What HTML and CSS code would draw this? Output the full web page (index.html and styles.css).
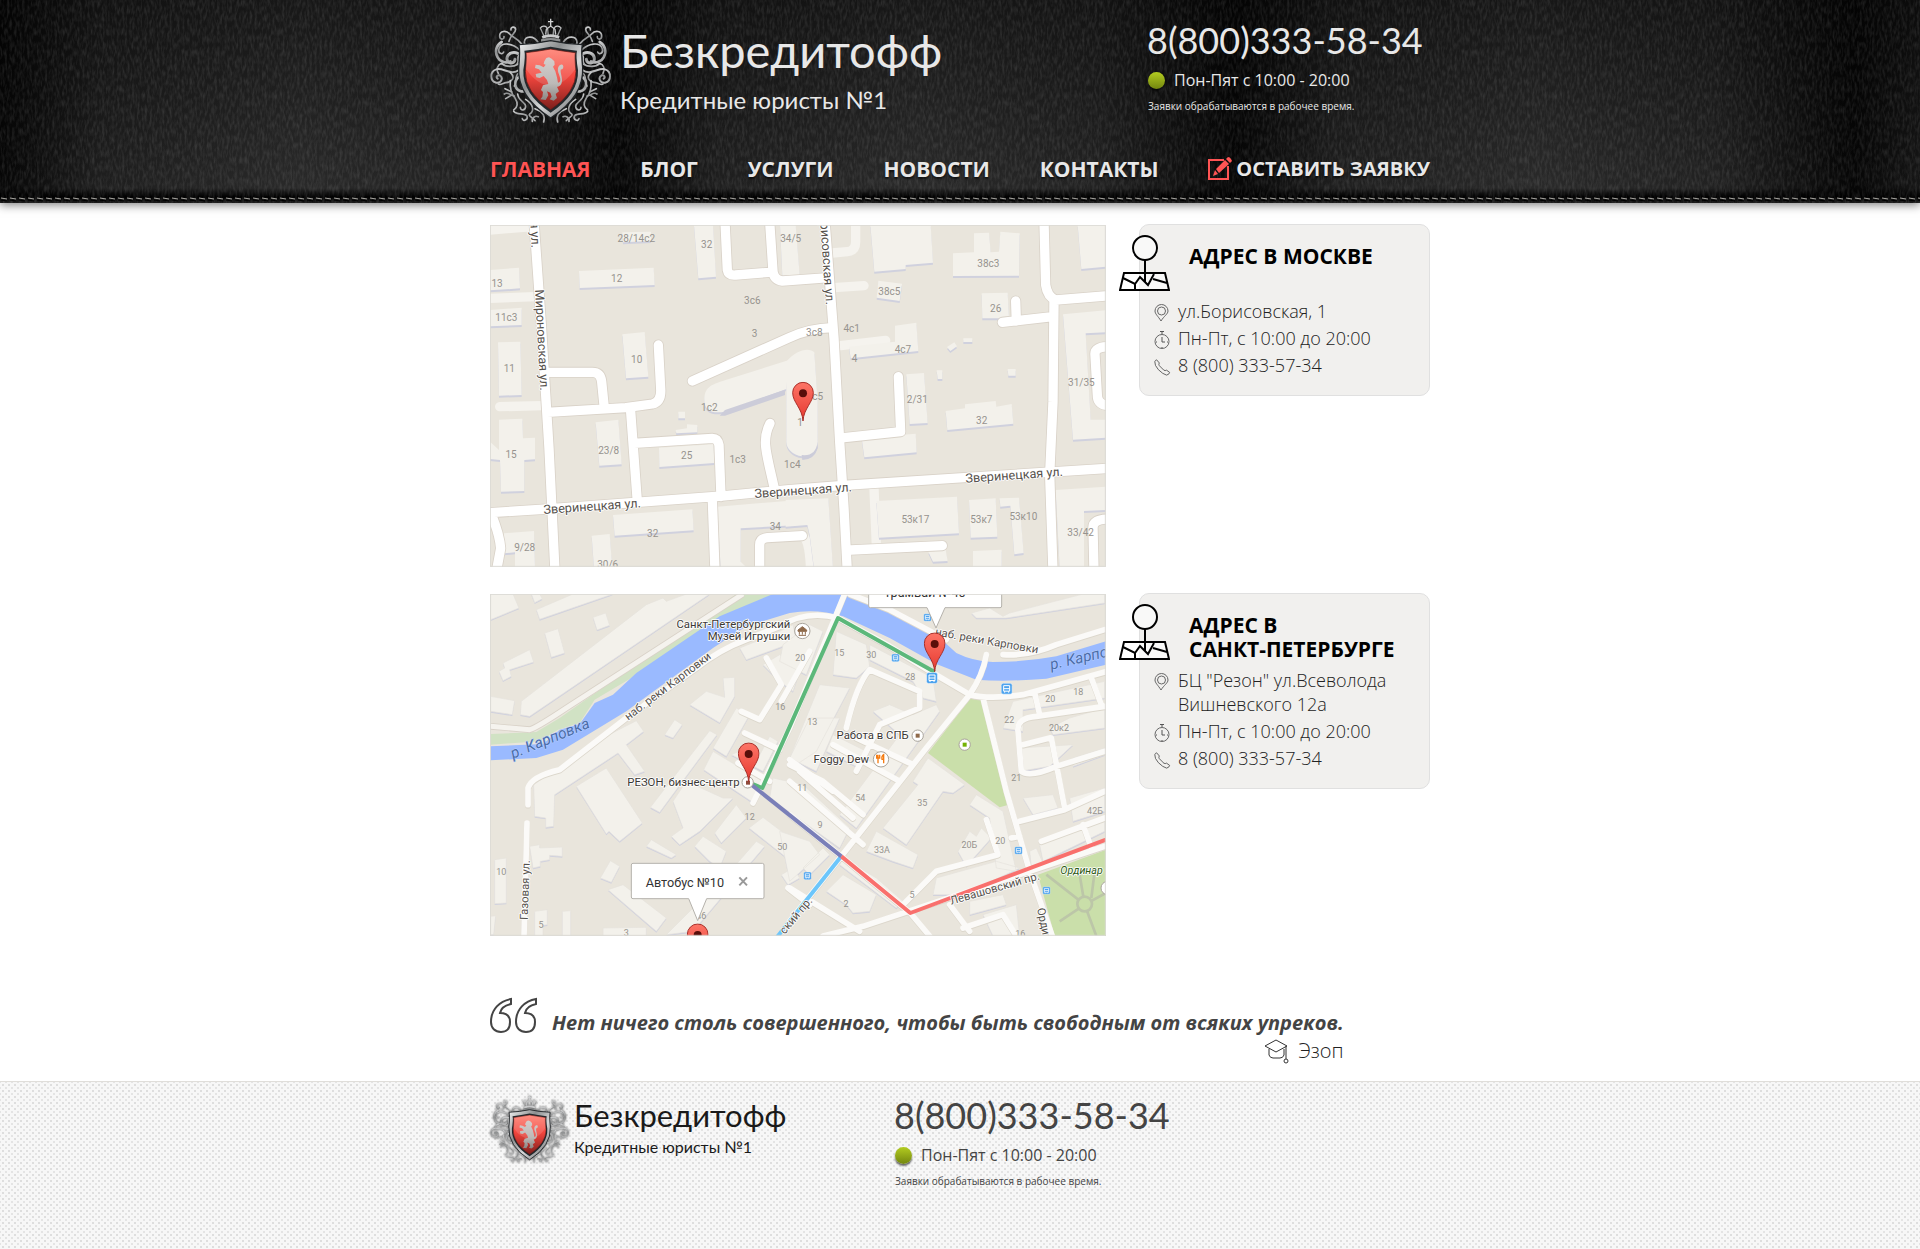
FILE: index.html
```html
<!DOCTYPE html>
<html lang="ru">
<head>
<meta charset="utf-8">
<title>Безкредитофф — Контакты</title>
<meta name="viewport" content="width=device-width, initial-scale=1">
<link rel="stylesheet" href="styles.css">
</head>
<body>

<svg class="defs" aria-hidden="true">
  <defs>
    <linearGradient id="steel" x1="0" y1="0" x2="1" y2="1">
      <stop offset="0" stop-color="#f4f4f4"/><stop offset=".35" stop-color="#8c8f90"/>
      <stop offset=".6" stop-color="#d6d7d8"/><stop offset="1" stop-color="#55585a"/>
    </linearGradient>
    <linearGradient id="ornament" x1="0" y1="0" x2="0" y2="1">
      <stop offset="0" stop-color="#c9cacb"/><stop offset=".5" stop-color="#8f9192"/><stop offset="1" stop-color="#b5b6b7"/>
    </linearGradient>
    <linearGradient id="enamel" x1="0" y1="0" x2="0" y2="1">
      <stop offset="0" stop-color="#ff7a6b"/><stop offset=".45" stop-color="#f2453d"/><stop offset="1" stop-color="#7d1f1c"/>
    </linearGradient>
    <linearGradient id="lion" x1="0" y1="0" x2="0" y2="1">
      <stop offset="0" stop-color="#d4cfcd"/><stop offset=".6" stop-color="#bdbab8"/><stop offset="1" stop-color="#8a8582"/>
    </linearGradient>
    <linearGradient id="pin-red" x1="0" y1="0" x2="0" y2="1">
      <stop offset="0" stop-color="#fd7567"/><stop offset="1" stop-color="#e6382f"/>
    </linearGradient>

    <symbol id="emblem" viewBox="15 12 363 324">
      <g id="emblem-half" fill="none" stroke="url(#ornament)" stroke-width="5" stroke-linecap="round">
        <path d="M160 86C145 62 120 66 118 84C117 95 130 98 133 90"/>
        <path d="M112 92C96 70 84 72 74 60C64 48 44 50 44 66C44 78 58 78 57 68"/>
        <path d="M72 82C78 60 92 58 92 46C90 36 76 38 78 48"/>
        <path d="M104 108C84 88 50 82 42 104C38 118 52 124 56 114"/>
        <path d="M50 84C34 94 28 112 38 130C44 142 62 150 76 142" stroke-width="8"/>
        <path d="M98 118C84 112 68 118 66 132C64 150 88 152 90 136" stroke-width="9"/>
        <path d="M100 150C84 160 62 160 50 148C38 152 32 166 40 178"/>
        <path d="M102 168C78 186 54 160 34 166C14 172 14 202 34 206C50 208 56 190 44 184C36 182 32 190 38 194" stroke-width="6"/>
        <path d="M76 176C92 190 82 204 62 206C54 208 44 214 40 210"/>
        <path d="M104 188C84 200 88 226 108 232C124 234 124 216 112 216" stroke-width="8"/>
        <path d="M76 200C74 222 78 238 90 252C100 268 98 280 86 288"/>
        <path d="M60 224L80 234M58 240C68 232 76 244 88 246M62 254L78 244"/>
        <path d="M98 240C100 262 120 262 122 276C122 290 106 292 106 280"/>
        <path d="M86 292C96 306 114 294 126 306C130 318 114 324 112 314"/>
        <path d="M122 256C144 270 150 290 134 300C128 306 144 310 150 320"/>
        <path d="M150 284C172 292 182 304 176 324M160 308C150 304 140 312 142 322"/>
        <path d="M88 216C96 206 88 186 100 178M96 150C106 140 92 128 104 122"/>
        <path d="M178 68L166 42C172 34 184 34 188 46L190 66" stroke-width="4"/>
      </g>
      <use href="#emblem-half" transform="matrix(-1 0 0 1 394 0)"/>
      <path d="M197 14V36M189 23H205" stroke="#d3d4d5" stroke-width="4"/>
      <path d="M170 66Q197 56 224 66L221 74Q197 66 173 74Z" fill="#c9cacb"/>
      <path d="M182 62L184 46L197 36L210 46L212 62" fill="none" stroke="#c9cacb" stroke-width="4"/>
      <path d="M168 76Q197 68 226 76V84Q197 78 168 84Z" fill="#8b8d8e"/>
      <path d="M102 92Q150 90 197 80Q244 90 292 92Q288 110 293 160Q298 248 197 312Q96 248 101 160Q106 110 102 92Z" fill="url(#steel)" stroke="#202427" stroke-width="4"/>
      <path d="M118 110Q158 106 197 98Q236 106 276 110Q272 125 279 168Q282 240 197 296Q112 240 115 168Q122 125 118 110Z" fill="#23292d"/>
      <path d="M123 116Q158 112 197 105Q236 112 271 116Q268 128 273 172Q274 236 197 287Q120 236 121 172Q126 128 123 116Z" fill="url(#enamel)" stroke="#5c1614" stroke-width="2"/>
      <path d="M124 118Q158 113 197 107Q236 113 270 118L271 165Q236 215 197 215Q158 215 123 165Z" fill="#fff" opacity=".14"/>
      <path d="M178 142L184 132L192 130L200 134L208 142L209 152L204 158L211 172L216 190L219 206C232 204 224 186 220 176C216 162 222 150 232 152C238 156 234 168 228 166C224 172 232 188 231 200C230 214 222 218 216 218L222 232L212 240L216 252L206 260L194 256L200 248L196 236L186 232L190 244L182 258L166 256L172 248L174 234L168 228L174 214L190 210L186 198L176 186L164 192L154 190L152 180L162 178L170 176L162 166L150 162L152 152L164 154L176 160L182 152L176 150Z" fill="url(#lion)"/>
    </symbol>

    <symbol id="i-map-pin" viewBox="0 0 51 56">
      <path d="M5 38L1 55H50L46 38Z" fill="#fff" fill-opacity=".6" stroke="#000" stroke-width="2"/>
      <circle cx="26" cy="13" r="12" fill="#f9f9f8" stroke="#000" stroke-width="2"/>
      <path d="M26 25V47M4 43L16 49L21 42L29 50L35 39M16 49V55M34 44L48 48" fill="none" stroke="#000" stroke-width="2"/>
    </symbol>
    <symbol id="i-place" viewBox="0 0 18 20">
      <path d="M8 18C5 13 2 11 2 8A6.500 6.500 0 0 1 15 8C15 11 11 13 8 18Z" fill="none" stroke="#666"/>
      <circle cx="8.500" cy="8" r="4" fill="none" stroke="#666"/>
    </symbol>
    <symbol id="i-time" viewBox="0 0 18 20">
      <circle cx="9" cy="11.500" r="7" fill="none" stroke="#666"/>
      <path d="M7 1.500H11M9 2V4M9 7V12H12M3 12H4M14 12H15M9 17V18" fill="none" stroke="#555"/>
    </symbol>
    <symbol id="i-phone" viewBox="0 0 20 20">
      <path d="M4 2L7 5.500Q6 7 7 8.500L12 13.500Q13.500 14.500 15 13.500L18.500 16Q18 18.500 15 19Q11 18 6 13Q1.500 8 2 4Q2.500 2.500 4 2Z" fill="none" stroke="#555"/>
    </symbol>

    <symbol id="pin" viewBox="0 0 66 120">
      <path d="M33 118C31 80 2 62 2 33A31 31 0 0 1 64 33C64 62 35 80 33 118Z" fill="url(#pin-red)" stroke="#a8302a" stroke-width="3"/>
      <circle cx="33" cy="35" r="12" fill="#590e0a"/>
    </symbol>
    <symbol id="bus" viewBox="0 0 24 24">
      <rect x="1" y="1" width="22" height="22" rx="4" fill="#4da3ee" stroke="#fff"/>
      <path d="M6 6H18V17H6ZM6 12H18M8 17V20M16 17V20" fill="none" stroke="#fff" stroke-width="2"/>
    </symbol>
  </defs>
</svg>

<header class="site-header">
  <svg class="leather" aria-hidden="true">
    <filter id="grain" x="0" y="0" width="100%" height="100%">
      <feTurbulence type="fractalNoise" baseFrequency=".4 .14" numOctaves="2" seed="4"/>
      <feColorMatrix values="0 0 0 0 1  0 0 0 0 1  0 0 0 0 1  1.600 0 0 0 -.6"/>
    </filter>
    <rect width="100%" height="100%" filter="url(#grain)"/>
  </svg>
  <div class="container">
    <div class="header-top">
      <a class="brand" href="#">
        <svg class="brand-emblem" role="img" aria-label="Герб"><use href="#emblem"/></svg>
        <span class="brand-text">
          <span class="brand-name">Безкредитофф</span>
          <span class="brand-tagline">Кредитные юристы №1</span>
        </span>
      </a>
      <div class="contact">
        <a class="phone" href="tel:88003335834">8(800)333-58-34</a>
        <p class="hours"><span class="dot"></span>Пон-Пят с 10:00 - 20:00</p>
        <p class="note">Заявки обрабатываются в рабочее время.</p>
      </div>
    </div>
    <nav class="nav">
      <a class="active" href="#">ГЛАВНАЯ</a>
      <a href="#">БЛОГ</a>
      <a href="#">УСЛУГИ</a>
      <a href="#">НОВОСТИ</a>
      <a href="#">КОНТАКТЫ</a>
      <a class="request" href="#">
        <svg class="request-icon" viewBox="0 0 24 24" aria-hidden="true">
          <path d="M16 3H1V22H20V9" fill="none" stroke="#ff5454" stroke-width="2"/>
          <path d="M5 19L7 13L10 17ZM8 12L17 3L21 7L11 16ZM18 2L20 0Q22 0 23 2L24 4L22 6Z" fill="#ff5454"/>
        </svg>ОСТАВИТЬ ЗАЯВКУ</a>
    </nav>
  </div>
  <svg class="stitch" aria-hidden="true">
    <defs>
      <pattern id="thread" width="9" height="5" patternUnits="userSpaceOnUse">
        <path d="M1 1L7 2" stroke="#aaa8a2" stroke-width="1"/>
        <path d="M1 3L7 4" stroke="#000" stroke-width="1"/>
      </pattern>
    </defs>
    <rect width="100%" height="100%" fill="url(#thread)"/>
  </svg>
</header>

<main class="container main">
  <section class="office">
    <svg class="map" viewBox="33 30 1848 1026" role="img" aria-label="Карта: Москва, ул. Борисовская, 1">
      <defs>
        <g id="m-houses">
          <path d="M33 165L120 158L123 220L33 226ZM33 285L128 278V330L33 334ZM57 382L124 380L128 540L60 542ZM60 614L130 611L132 670L168 668V733L136 735V828L66 830L63 735L33 732V680L60 705ZM75 955L165 948L168 1060H108V1012L75 1015ZM300 168L524 158L527 210L302 219ZM430 52L516 50V78L432 82ZM645 30H702L711 185L658 190ZM903 30H950L962 180L910 182ZM430 358L497 351L508 485L441 490ZM350 622L418 614L428 748L361 752ZM540 698L704 688L706 744L541 756ZM402 900L640 883L644 946L407 962ZM338 962L392 957L400 1060H345ZM715 875L960 855V930L785 940V1040L805 1060H725ZM598 590H618V610H598ZM590 645L624 640V628L655 630V652L592 655ZM676 560C675 520 690 510 740 495L930 435L922 522L738 590C700 595 680 590 676 560Z"/>
          <g transform="translate(930 0)">
            <path d="M244 30H425L432 143L350 150V162L256 170ZM268 197L339 206L332 258L263 248ZM318 332L382 323L388 408L185 430L180 395L318 380ZM352 478L405 474L416 624L362 627ZM218 670L380 656L383 712L226 727ZM492 115L555 112V55L600 53L605 112L630 110L634 50L692 55L690 182L492 183ZM578 235L656 233L660 310H580ZM470 588L528 580V568L620 558L622 575L668 567L673 626L475 645ZM474 396L496 382L504 394L484 408ZM523 370H550V381H523ZM443 466H460V492H446ZM656 462H680V482H658ZM866 30H950V155L877 162ZM822 298L950 286V352L890 355L905 614H950V668L852 674ZM262 858L504 845L510 955L270 968ZM540 855L620 850L625 965L545 968ZM632 850L690 848L704 1014L676 1018L664 872L634 875ZM800 825L950 815V885L885 888V1060H812ZM418 1010L470 1005L476 1038L432 1040ZM552 1008L638 1004V1060H552ZM-10 855L118 850L132 1060H75L62 960L55 930L-10 935ZM-8 440C20 405 60 395 76 412L86 560V690C80 720 60 728 40 724C10 720 -8 700 -8 680Z"/>
          </g>
        </g>
        <g id="m-roads">
          <path d="M165 20L187 330L210 700L228 1070M33 893L205 882L730 843L930 824L1095 811L1890 760M205 592L440 578L520 567Q548 560 545 520L538 390M205 472H340Q365 472 368 500L376 580M455 590L475 860M465 685L700 670Q716 670 720 690L726 845M640 498L930 368Q990 340 1060 338M873 625C845 680 865 720 888 830M738 20L745 165Q748 182 770 180L870 172M872 20L882 170Q885 195 910 198L1050 188M700 855L708 1070M842 1070V990Q842 970 865 968L970 962M38 900Q62 960 65 1000L52 1070"/>
          <g transform="translate(930 0)">
            <path d="M108 20L135 370L152 680L165 880L175 1070M165 668L335 650L328 485M765 20L770 210Q775 245 800 255L948 243M795 255L792 560L782 780L792 1070M640 322L790 305M680 258L682 318M960 395Q915 395 918 420L925 540Q925 570 960 572M185 1005L460 992M960 912Q910 912 912 940L915 1070"/>
          </g>
        </g>
      </defs>
      <rect class="ground" x="33" y="30" width="1848" height="1026"/>
      <path class="lane" d="M33 250L170 245M62 575L190 572M33 45L160 35M1130 20V80Q1130 108 1105 110L1060 114M1065 218L1155 212M1085 392L1220 376M1185 820L1192 990M965 962Q992 960 995 1070"/>
      <use class="house-side" href="#m-houses" y="6"/>
      <use class="house" href="#m-houses"/>
      <path d="M722 602L738 585L918 524V540L738 602ZM968 720Q1010 725 1016 680V700Q1005 735 970 735Z" fill="#ccccd9"/>
      <use class="road-edge" href="#m-roads"/>
      <use class="road" href="#m-roads"/>
      <g class="num">
        <text x="54" y="217">13</text><text x="82" y="317">11с3</text><text x="91" y="472">11</text><text x="96" y="730">15</text><text x="137" y="1007">9/28</text>
        <text x="472" y="80">28/14с2</text><text x="413" y="200">12</text><text x="683" y="98">32</text><text x="935" y="80">34/5</text><text x="820" y="268">3с6</text><text x="827" y="365">3</text>
        <text x="473" y="445">10</text><text x="691" y="587">1с2</text><text x="389" y="718">23/8</text><text x="623" y="733">25</text><text x="776" y="745">1с3</text><text x="940" y="760">1с4</text>
        <text x="521" y="965">32</text><text x="889" y="944">34</text><text x="386" y="1060">30/6</text>
        <text x="1006" y="364">3с8</text><text x="1016" y="554">с5</text><text x="963" y="632">1</text><text x="1118" y="350">4с1</text><text x="1231" y="241">38с5</text><text x="1272" y="415">4с7</text><text x="1127" y="442">4</text>
        <text x="1528" y="155">38с3</text><text x="1550" y="290">26</text><text x="1315" y="565">2/31</text><text x="1508" y="628">32</text><text x="1807" y="512">31/35</text>
        <text x="1309" y="923">53к17</text><text x="1507" y="923">53к7</text><text x="1633" y="914">53к10</text><text x="1805" y="962">33/42</text>
      </g>
      <g class="street">
        <text transform="translate(148 -84) rotate(87)">овская ул.</text>
        <text transform="translate(168 224) rotate(87)">Мироновская ул.</text>
        <text transform="translate(1022 2) rotate(86)">орисовская ул.</text>
        <text transform="translate(194 897) rotate(-4)">Зверинецкая ул.</text>
        <text transform="translate(827 849) rotate(-4)">Зверинецкая ул.</text>
        <text transform="translate(1460 803) rotate(-4)">Зверинецкая ул.</text>
      </g>
      <use href="#pin" x="939" y="500" width="66" height="120"/>
      <rect class="frame" x="34" y="31" width="1845" height="1023"/>
    </svg>
    <article class="card">
      <svg class="card-pin" aria-hidden="true"><use href="#i-map-pin"/></svg>
      <h2>АДРЕС В МОСКВЕ</h2>
      <ul>
        <li><svg class="icon"><use href="#i-place"/></svg><span>ул.Борисовская, 1</span></li>
        <li><svg class="icon"><use href="#i-time"/></svg><span>Пн-Пт, с 10:00 до 20:00</span></li>
        <li><svg class="icon"><use href="#i-phone"/></svg><span>8 (800) 333-57-34</span></li>
      </ul>
    </article>
  </section>

  <section class="office">
    <svg class="map map-city" viewBox="31 28 1848 1026" role="img" aria-label="Карта: Санкт-Петербург, БЦ Резон">
      <defs>
        <g id="p-houses">
          <path d="M33 28H100L118 70L33 105ZM155 28H180L188 42L165 54ZM170 75L280 28H400L180 104ZM340 98L378 85L390 122L352 136ZM195 145L235 132L255 205L215 218ZM70 235L150 195L162 232L90 255L95 275L70 288L58 260L75 250ZM33 335L105 348L98 390L33 380ZM125 350L500 60L550 40L560 50L620 28H690L150 395L122 390ZM162 600L350 470L470 408L492 440L440 480L495 560L465 570L415 505L225 630L222 725L198 728V700L165 695ZM290 605L380 550L488 715L420 770L388 740L380 748ZM630 360L680 320L735 338L730 280L765 278V335L720 414ZM555 450L585 405L608 420L580 460ZM512 668L690 438L712 450L540 683ZM672 555L700 500L850 590L815 650ZM700 490L770 370L810 390L740 515ZM755 510L850 560L895 470L870 455L835 520L790 495ZM850 240L900 210L960 260L940 320L900 290ZM580 650L620 590L730 640L760 640L660 740L600 780L575 755L610 730ZM705 745L770 660L800 700L725 775ZM808 730L850 698L985 800L960 850ZM645 785L670 755L740 800L720 850L690 830ZM830 770L855 785L640 1040L560 1050L650 960L600 880L625 875L690 930ZM500 785L515 765L590 810L575 820ZM362 880L392 828L420 845L395 893ZM150 785L180 780V790L248 787V815L210 812V825L182 830V845L160 850ZM45 825L80 820V955L45 957ZM165 980L203 975V1020L190 1022V1054H165ZM248 980L273 978V1054H248ZM33 995L48 993L42 1050H33ZM370 1030L500 1028V1054H370ZM385 915L430 900L560 1000L530 1040ZM780 190L880 150L940 120L950 170L800 225ZM905 870L940 850L960 880L925 900Z"/>
          <g transform="translate(930 0)">
            <path d="M-20 180L60 120L100 140L50 270L-30 230ZM140 140L230 180L240 245L200 280L130 270ZM240 180L430 280L440 350L400 340L370 290L240 225ZM90 300L180 310L80 500L20 540L0 520ZM250 380L300 360L370 390L440 360L450 380L200 730L150 690L330 450ZM130 450L230 500L210 550L110 500ZM60 400L150 400L80 560L0 520ZM-50 580L40 600L180 730L150 790L-60 640ZM280 730L385 600L370 590L415 520L525 600L490 625L460 620L350 780ZM230 800L260 740L385 810L370 850L310 830ZM160 820L260 880L340 950L320 970L150 840ZM505 800L540 740L560 755L575 730L605 760L530 845ZM540 660L560 630L640 680L680 860L620 850L600 700ZM430 930L440 880L620 830L690 850L520 930ZM540 950L640 930L650 960L540 990ZM640 430L670 350L945 290V340L700 375L700 440ZM780 430L840 400L945 370V430L790 450ZM700 640L790 630L805 670L730 690ZM840 640L945 610V680L850 710ZM850 520L945 490V510L850 545ZM750 780L900 720L945 700V740L760 830ZM690 490L850 480L780 545L690 560ZM720 800L740 790L760 835L725 845ZM545 85L600 70L640 95L660 85L880 28H945V55L650 100L560 100ZM40 850L100 790L120 810L60 870ZM-30 740L60 770L90 810L0 890ZM110 920L160 870L260 930L240 980L190 985L170 960ZM580 990L680 960L690 1054H610Z"/>
          </g>
        </g>
        <g id="p-roads" stroke-width="17">
          <path d="M145 660V610Q155 575 240 555L440 400L650 250Q720 195 800 165L900 125Q980 75 1075 100M142 715L133 1054M785 380L840 405L905 300L860 220M795 445L900 495M775 535L870 590M925 910L990 960M820 655L930 430L1095 28M930 525L1060 620M905 350L990 200M960 560L1120 700"/>
          <g transform="translate(930 0)">
            <path d="M145 100L300 185L430 265L540 330Q600 345 700 330L945 262M180 28L300 75L470 165M640 210Q720 215 800 180L945 135M590 210Q580 270 540 330L410 490L155 815L0 1010M580 340L650 620L720 860L790 1060M0 690L155 815L362 985L420 1054M100 1054L220 1025L945 785M0 910L210 1040M945 365L740 395Q680 400 685 440L695 560Q720 580 800 545L945 500M700 480L780 460M785 460L825 670M690 710L825 675L945 620M735 325L750 390M905 280L935 360M590 705L625 810L440 860L340 960M755 770L945 700M880 720L905 790M665 760L690 755M200 560L270 420L390 370L390 320L240 255Q200 300 170 430M0 590L220 780M130 480L330 590M200 460L370 540M0 540L100 590L220 690M480 960L540 1040M520 1030L640 990L680 1054"/>
          </g>
        </g>
      </defs>
      <rect class="ground" x="31" y="28" width="1848" height="1026"/>
      <path d="M33 448L170 442L240 400L770 28H880L345 345L300 415L235 435L180 470L33 480Z" fill="#d1e2c4"/>
      <use class="house-side" href="#p-houses" y="4"/>
      <use class="house" href="#p-houses"/>
      <path d="M33 485L190 478L240 435L300 418L345 355L400 330L470 265L720 95L880 28H1120L1230 85L1370 150L1430 205Q1480 230 1540 232Q1640 232 1730 215L1879 170V240L1700 282Q1580 292 1490 285L1370 238L1230 160L1090 95Q1010 70 930 85L800 125L700 190L440 380L250 495L170 520L33 527Z" fill="#9abaff"/>
      <path class="park" d="M1475 338L1510 348L1582 662L1560 668L1345 505Z"/>
      <path class="park" d="M1675 870L1879 795V1054H1725Z"/>
      <path d="M1700 870L1815 960L1800 870M1815 960L1740 1010M1815 960L1879 925M1815 960L1850 1054M1845 860L1835 940" fill="none" stroke="#bcc6a8" stroke-width="8"/>
      <circle cx="1815" cy="958" r="22" fill="#c9dfa9" stroke="#bcc6a8" stroke-width="8"/>
      <path class="quay-edge" d="M33 425L150 435Q170 430 260 370L790 28"/>
      <path class="quay" d="M33 425L150 435Q170 430 260 370L790 28"/>
      <use class="street-edge" href="#p-roads"/>
      <use class="street-line" href="#p-roads"/>
      <g fill="none" stroke-width="12" stroke-linejoin="round">
        <path d="M805 592L848 610L1075 100L1365 262" stroke="#5cb87a"/>
        <path d="M1085 815L890 1060" stroke="#6cc6fb"/>
        <path d="M1085 815L1292 985L1879 765" stroke="#f9706d"/>
        <path d="M805 592L1085 815" stroke="#7a7fb8"/>
      </g>
      <g class="num light">
        <text x="902" y="375">16</text><text x="810" y="705">12</text><text x="908" y="795">50</text><text x="65" y="872">10</text><text x="184" y="1029">5</text><text x="440" y="1054">3</text><text x="665" y="1002">46</text>
        <text x="962" y="230">20</text><text x="1079" y="213">15</text><text x="1175" y="219">30</text><text x="1292" y="285">28</text><text x="998" y="420">13</text><text x="968" y="618">11</text><text x="1142" y="648">54</text><text x="1021" y="729">9</text><text x="1328" y="663">35</text><text x="1207" y="804">33А</text><text x="1297" y="939">5</text><text x="1099" y="966">2</text><text x="1469" y="789">20Б</text><text x="1562" y="777">20</text><text x="1589" y="414">22</text><text x="1712" y="351">20</text><text x="1796" y="330">18</text><text x="1738" y="438">20к2</text><text x="1610" y="588">21</text><text x="1846" y="687">42Б</text><text x="1622" y="1058">16</text>
      </g>
      <g class="street">
        <text transform="translate(446 408) rotate(-37)">наб. реки Карповки</text>
        <text transform="translate(144 1006) rotate(-88)">Газовая ул.</text>
        <text transform="translate(1365 152) rotate(10)">наб. реки Карповки</text>
        <text transform="translate(1415 960) rotate(-16)">Левашовский пр.</text>
        <text transform="translate(915 1050) rotate(-50)">ский пр.</text>
        <text transform="translate(1672 972) rotate(78)">Орди</text>
      </g>
      <g class="water">
        <text transform="translate(100 522) rotate(-22)">р. Карповка</text>
        <text transform="translate(1715 255) rotate(-13)">р. Карпо</text>
      </g>
      <g class="place">
        <text x="932" y="130" text-anchor="end">Санкт-Петербургский</text>
        <text x="932" y="166" text-anchor="end">Музей Игрушки</text>
        <text x="780" y="605" text-anchor="end">РЕЗОН, бизнес-центр</text>
        <text x="1287" y="463" text-anchor="end">Работа в СПБ</text>
        <text x="1168" y="535" text-anchor="end">Foggy Dew</text>
        <text class="park-name" x="1742" y="868">Ординар</text>
      </g>
      <g fill="#fff" stroke="#a9a49b" stroke-width="3">
        <circle cx="968" cy="139" r="23"/><circle cx="1204" cy="524" r="23"/>
        <circle cx="1314" cy="453" r="17"/><circle cx="1455" cy="480" r="17"/><circle cx="804" cy="593" r="17"/><circle cx="1884" cy="910" r="20"/>
      </g>
      <path d="M955 136L968 126L981 136V140H955ZM957 152H979M959 141V150M968 141V150M977 141V150" fill="#8f6a4b" stroke="#8f6a4b" stroke-width="3"/>
      <path d="M1195 510V536M1191 510V520H1200V510M1212 536V510Q1205 514 1207 524H1212" fill="none" stroke="#f57c12" stroke-width="4"/>
      <path d="M1308 447H1320V459H1308Z" fill="#8f6a4b"/><path d="M1449 474H1461V486H1449Z" fill="#74b304"/><path d="M799 588H811V600H799Z" fill="#8f4a3b"/>
      <use href="#bus" x="1339" y="262" width="36" height="36"/><use href="#bus" x="1563" y="294" width="36" height="36"/>
      <use href="#bus" x="1331" y="86" width="25" height="25"/><use href="#bus" x="1235" y="207" width="25" height="25"/><use href="#bus" x="1604" y="785" width="25" height="25"/><use href="#bus" x="1688" y="905" width="25" height="25"/><use href="#bus" x="971" y="861" width="25" height="25"/>
      <g class="bubble">
        <path d="M1167 20H1566V64Q1566 69 1561 69H1396L1369 130L1342 69H1172Q1167 69 1167 64Z"/>
        <path d="M460 836H848Q853 836 853 841V937Q853 942 848 942H681L654 1008L627 942H460Q455 942 455 937V841Q455 836 460 836Z"/>
      </g>
      <g class="bubble-text">
        <text x="1212" y="37">Трамвай №40</text>
        <text x="498" y="906">Автобус №10</text>
      </g>
      <path d="M779 878L802 902M802 878L779 902" stroke="#999" stroke-width="6"/>
      <use href="#pin" x="1332" y="143" width="66" height="120"/>
      <use href="#pin" x="774" y="473" width="66" height="120"/>
      <use href="#pin" x="621" y="1016" width="66" height="120"/>
      <rect class="frame" x="32" y="29" width="1845" height="1023"/>
    </svg>
    <article class="card">
      <svg class="card-pin" aria-hidden="true"><use href="#i-map-pin"/></svg>
      <h2>АДРЕС В<br>САНКТ-ПЕТЕРБУРГЕ</h2>
      <ul>
        <li><svg class="icon"><use href="#i-place"/></svg><span>БЦ "Резон" ул.Всеволода Вишневского 12а</span></li>
        <li><svg class="icon"><use href="#i-time"/></svg><span>Пн-Пт, с 10:00 до 20:00</span></li>
        <li><svg class="icon"><use href="#i-phone"/></svg><span>8 (800) 333-57-34</span></li>
      </ul>
    </article>
  </section>

  <figure class="quote">
    <svg class="quote-mark" viewBox="0 0 47 37" aria-hidden="true">
      <g fill="none" stroke="#444" stroke-width="2">
        <path id="mark" d="M21 2C10 4 1 12 1 25C1 31 5 35 11 35C17 35 20 31 20 25C20 19 16 16 10 16C11 11 16 8 21 7Z"/>
        <use href="#mark" x="25"/>
      </g>
    </svg>
    <div class="quote-body">
      <blockquote>Нет ничего столь совершенного, чтобы быть свободным от всяких упреков.</blockquote>
      <figcaption>
        <svg class="cap" viewBox="0 0 26 26" aria-hidden="true">
          <path d="M1 8L12 2L23 8L12 14ZM5 11V17Q6 20 9 20H16Q19 20 20 17V11M22 8V21" fill="none" stroke="#333"/>
          <circle cx="22" cy="23" r="2" fill="none" stroke="#333"/>
        </svg>Эзоп</figcaption>
    </div>
  </figure>
</main>

<footer class="site-footer">
  <div class="container footer-row">
    <a class="brand brand-small" href="#">
      <svg class="brand-emblem" role="img" aria-label="Герб"><use href="#emblem"/></svg>
      <span class="brand-text">
        <span class="brand-name">Безкредитофф</span>
        <span class="brand-tagline">Кредитные юристы №1</span>
      </span>
    </a>
    <div class="contact">
      <a class="phone" href="tel:88003335834">8(800)333-58-34</a>
      <p class="hours"><span class="dot"></span>Пон-Пят с 10:00 - 20:00</p>
      <p class="note">Заявки обрабатываются в рабочее время.</p>
    </div>
  </div>
</footer>
</body>
</html>
```
FILE: styles.css
```css
* { box-sizing: border-box; }

body {
  margin: 0;
  min-height: 100vh;
  display: flex;
  flex-direction: column;
  background: #fff;
  color: #444;
  font-family: "Open Sans", "Noto Sans", sans-serif;
}

a { color: inherit; text-decoration: none; }
p, h2, ul, figure, blockquote { margin: 0; padding: 0; }
ul { list-style: none; }
.defs { position: absolute; width: 0; height: 0; }

.container {
  width: 100%;
  max-width: 940px;
  margin: 0 auto;
}

/* Header */
.site-header {
  position: relative;
  padding-top: 18px;
  color: #e8e8e8;
  background:
    linear-gradient(to bottom, transparent 188px, #000 197px, #1c1c1c 203px),
    linear-gradient(to bottom, rgba(0, 0, 0, .45), rgba(0, 0, 0, 0) 190px),
    repeating-linear-gradient(to right, #060606 0, #1f1f1f 100px, #2a2a2a 300px, #222 480px, #060606 618px);
  box-shadow: 0 2px 9px rgba(0, 0, 0, .5);
}
.leather {
  position: absolute;
  inset: 0;
  width: 100%;
  height: 100%;
  opacity: .13;
}
.site-header .container { position: relative; }
.header-top {
  display: flex;
  justify-content: space-between;
}
.brand {
  display: flex;
  gap: 9px;
}
.brand-emblem {
  width: 121px;
  height: 108px;
}
.brand-text {
  display: flex;
  flex-direction: column;
  font-family: Lato, "Open Sans", sans-serif;
  white-space: nowrap;
}
.brand-name { font-size: 47px; line-height: 64px; }
.brand-tagline { font-size: 24px; line-height: 36px; }

.contact { width: 283px; }
.phone {
  display: block;
  font-family: Lato, "Open Sans", sans-serif;
  font-size: 36px;
  line-height: 44px;
  white-space: nowrap;
}
.hours {
  display: flex;
  align-items: center;
  gap: 9px;
  padding-left: 1px;
  font-size: 16px;
  line-height: 36px;
}
.dot {
  width: 17px;
  height: 17px;
  border-radius: 50%;
  background: linear-gradient(#b3cc20, #73860f);
  box-shadow: 0 2px 2px rgba(0, 0, 0, .6);
}
.note {
  padding-left: 1px;
  font-size: 10px;
  line-height: 16px;
  white-space: nowrap;
}

.nav {
  display: flex;
  justify-content: space-between;
  align-items: center;
  padding: 27px 0 18px;
  font-size: 21px;
  font-weight: 700;
  line-height: 32px;
  text-shadow: 0 2px 2px rgba(0, 0, 0, .6);
}
.nav .active { color: #ff5454; }
.request {
  display: flex;
  align-items: center;
  gap: 4px;
  font-size: 20px;
}
.request-icon {
  width: 24px;
  height: 24px;
}
.stitch {
  position: absolute;
  left: 0;
  bottom: 1px;
  width: 100%;
  height: 5px;
}

/* Offices */
.main {
  display: flex;
  flex-direction: column;
  gap: 27px;
  padding-top: 22px;
}
.office {
  display: flex;
  justify-content: space-between;
  align-items: flex-start;
}
.map {
  display: block;
  width: 66%;
  max-width: 616px;
  height: auto;
  font-family: Roboto, sans-serif;
}
.ground { fill: #e9e5dc; }
.house { fill: #f3f1eb; }
.house-side { fill: #d0d1de; }
.map-city .house { stroke: #e6e3dc; stroke-width: 2; }
.park { fill: #cadfaa; }
.lane { fill: none; stroke: #f5f3ee; stroke-width: 28; stroke-linecap: round; }
.road, .road-edge { fill: none; stroke-linecap: round; stroke-linejoin: round; }
.road { stroke: #fff; stroke-width: 28; }
.road-edge { stroke: #d9d2c8; stroke-width: 33; }
.quay { fill: none; stroke: #f5f3ee; stroke-width: 15; }
.quay-edge { fill: none; stroke: #d9d2c8; stroke-width: 20; }
.street-line, .street-edge { fill: none; stroke-linecap: round; stroke-linejoin: round; }
.street-line { stroke: #fbfaf8; }
.street-edge { stroke: #dcd7cc; transform: translate(0, 3px); }
.frame { fill: none; stroke: #dcdad5; stroke-width: 3; }
.num { fill: #96938e; font-size: 30px; text-anchor: middle; }
.light { font-size: 27px; }
.street, .place, .water { stroke: #fff; stroke-width: 5; paint-order: stroke; stroke-linejoin: round; }
.street { fill: #56514c; font-size: 38px; }
.map-city .street { font-size: 34px; }
.place { fill: #3c3835; font-size: 34px; }
.water { fill: #4a6ca8; font-size: 46px; font-style: italic; stroke: #b8d0ff; stroke-width: 3; }
.park-name { fill: #2d5a14; font-size: 32px; font-style: italic; }
.bubble { fill: #fff; stroke: #b5b2ac; stroke-width: 3; }
.bubble-text { fill: #333; font-size: 38px; }

.card {
  position: relative;
  width: 31%;
  max-width: 291px;
  margin-top: -1px;
  padding: 19px 16px 18px 13px;
  border: 1px solid #e0e0e0;
  border-radius: 10px;
  background: #f1f0ee;
}
.card-pin {
  position: absolute;
  left: -21px;
  top: 10px;
  width: 51px;
  height: 56px;
}
.card h2 {
  min-height: 48px;
  margin-bottom: 7px;
  padding-left: 36px;
  color: #000;
  font-size: 21px;
  font-weight: 700;
  line-height: 24px;
  white-space: nowrap;
}
.card ul {
  display: grid;
  gap: 3px;
}
.card li {
  display: flex;
  gap: 7px;
  color: #222;
  font-size: 18px;
  font-weight: 300;
  line-height: 24px;
}
.icon {
  flex: none;
  width: 18px;
  height: 20px;
  margin-top: 4px;
}

/* Quote */
.quote {
  display: flex;
  gap: 15px;
  padding: 34px 0 17px;
}
.quote-mark {
  width: 47px;
  height: 37px;
  flex: none;
}
.quote-body {
  display: flex;
  flex-direction: column;
  padding-top: 11px;
}
blockquote {
  font-size: 20px;
  font-weight: 700;
  font-style: italic;
  line-height: 30px;
  white-space: nowrap;
}
figcaption {
  display: flex;
  justify-content: flex-end;
  align-items: center;
  gap: 8px;
  color: #222;
  font-size: 20px;
  font-weight: 300;
  line-height: 26px;
}
.cap {
  width: 26px;
  height: 26px;
}

/* Footer */
.site-footer {
  flex: 1;
  padding: 11px 0 24px;
  border-top: 1px solid #e0deda;
  color: #444;
  background:
    radial-gradient(circle, #dedede 1px, transparent 1px) 0 0 / 6px 6px,
    radial-gradient(circle, #e4e4e4 1px, transparent 1px) 3px 3px / 6px 6px,
    #f7f7f7;
}
.footer-row { display: flex; }
.brand-small {
  flex: 0 0 404px;
  gap: 5px;
  color: #1a1a1a;
}
.brand-small .brand-emblem {
  width: 79px;
  height: 70px;
  margin-top: 2px;
  filter: drop-shadow(0 0 1px #444);
}
.brand-small .brand-name { font-size: 31px; line-height: 44px; }
.brand-small .brand-tagline { font-size: 16px; line-height: 20px; }
```
